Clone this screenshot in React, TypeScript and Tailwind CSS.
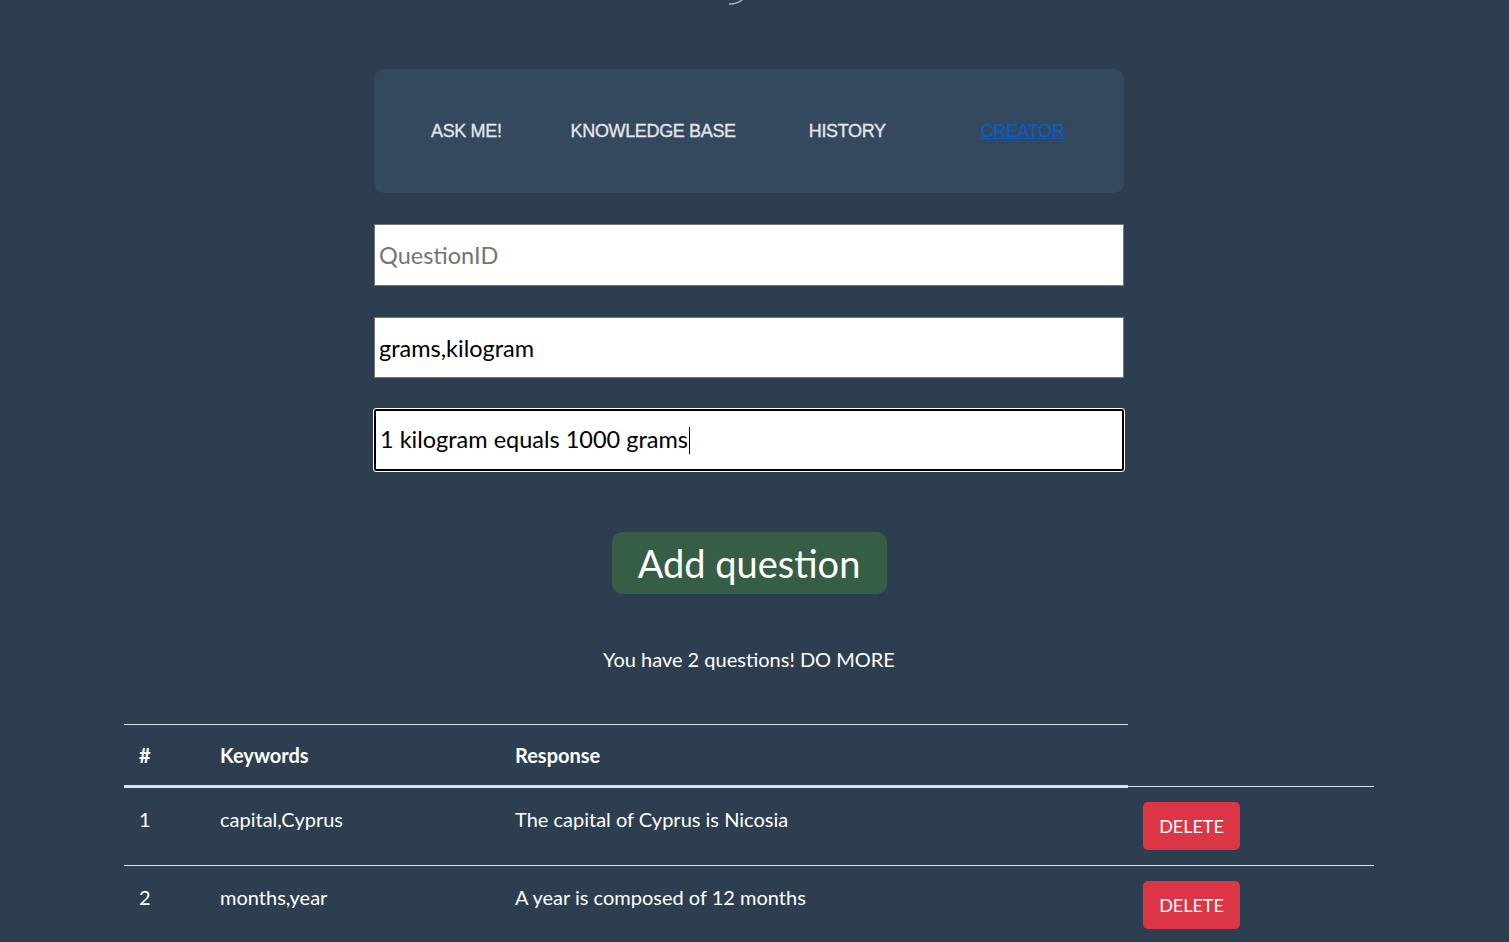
const rows = [
  { id: 1, keywords: "capital,Cyprus", response: "The capital of Cyprus is Nicosia" },
  { id: 2, keywords: "months,year", response: "A year is composed of 12 months" },
];

const body = "font-['Segoe_UI','Lato','Noto_Sans',sans-serif]";

const App = () => {
  return (
    <div className={`min-h-[942px] bg-[#2c3e50] ${body}`}>
      {/* Logo edge peeking in at the top */}
      <div className="h-[5px] overflow-hidden">
        <svg className="ml-[726px]" width="24" height="5" viewBox="0 0 24 5">
          <path d="M3 4 Q11 4.5 17 -1" fill="none" stroke="#aab4c0" strokeWidth="1.5" />
        </svg>
      </div>

      <div className="w-[1250px] ml-[124px]">
        <div className="w-[750px] mx-auto mt-[64px]">
          {/* Nav */}
          <nav className="h-[124px] bg-[#34495e] rounded-[10px] flex items-center pl-[57px] font-['Liberation_Sans',Arial,sans-serif] text-[18px] tracking-[-0.35px] text-[#e4e7eb] [-webkit-text-stroke:0.3px_#e4e7eb]">
            <a className="mr-[69px]">ASK ME!</a>
            <a className="mr-[73px]">KNOWLEDGE BASE</a>
            <a className="mr-[95px]">HISTORY</a>
            <a className="text-[#0b5cc0] underline [-webkit-text-stroke:0.3px_#0b5cc0]">CREATOR</a>
          </nav>

          {/* Form */}
          <div className="mt-[31px] flex flex-col gap-[31px]">
            <input
              className="h-[62px] w-full bg-white border border-[#767676] px-[4px] text-[23.5px] text-black placeholder:text-[#757575] outline-none"
              placeholder="QuestionID"
            />
            <input
              className="h-[61px] w-full bg-white border border-[#767676] px-[4px] text-[23.5px] text-black outline-none"
              defaultValue="grams,kilogram"
            />
            <div className="h-[62px] w-full bg-white border-2 border-black rounded-[2px] outline outline-1 outline-white flex items-center px-[4px] text-[23.5px] text-black">
              <span>1 kilogram equals 1000 grams</span>
              <span className="w-px h-[27px] bg-black ml-px" />
            </div>
          </div>

          <div className="flex justify-center mt-[61px]">
            <button className="h-[62px] w-[275px] rounded-[10px] bg-[#365e46] text-white text-[38px] leading-none">
              Add question
            </button>
          </div>

          <p className="mt-[50px] text-center text-white text-[20px]">You have 2 questions! DO MORE</p>
        </div>

        {/* Table */}
        <table className="mt-[50px] w-full text-white text-[20px] border-collapse">
          <thead>
            <tr>
              <th className="w-[81px] text-left font-bold px-[15px] py-[15px] leading-[30px] border-t border-b-[3px] border-[#dee2e6]">#</th>
              <th className="w-[295px] text-left font-bold px-[15px] py-[15px] leading-[30px] border-t border-b-[3px] border-[#dee2e6]">Keywords</th>
              <th className="w-[628px] text-left font-bold px-[15px] py-[15px] leading-[30px] border-t border-b-[3px] border-[#dee2e6]">Response</th>
              <th className="w-[246px]" />
            </tr>
          </thead>
          <tbody>
            {rows.map((r) => (
              <tr key={r.id} className="border-t border-[#dee2e6]">
                <td className="align-top px-[15px] py-[15px] leading-[32px]">{r.id}</td>
                <td className="align-top px-[15px] py-[15px] leading-[32px]">{r.keywords}</td>
                <td className="align-top px-[15px] py-[15px] leading-[32px]">{r.response}</td>
                <td className="align-top px-[15px] py-[15px]">
                  <button className="h-[48px] w-[97px] rounded-[5px] bg-[#dc3545] text-white text-[18px]">DELETE</button>
                </td>
              </tr>
            ))}
          </tbody>
        </table>
      </div>
    </div>
  );
};

export default App;
